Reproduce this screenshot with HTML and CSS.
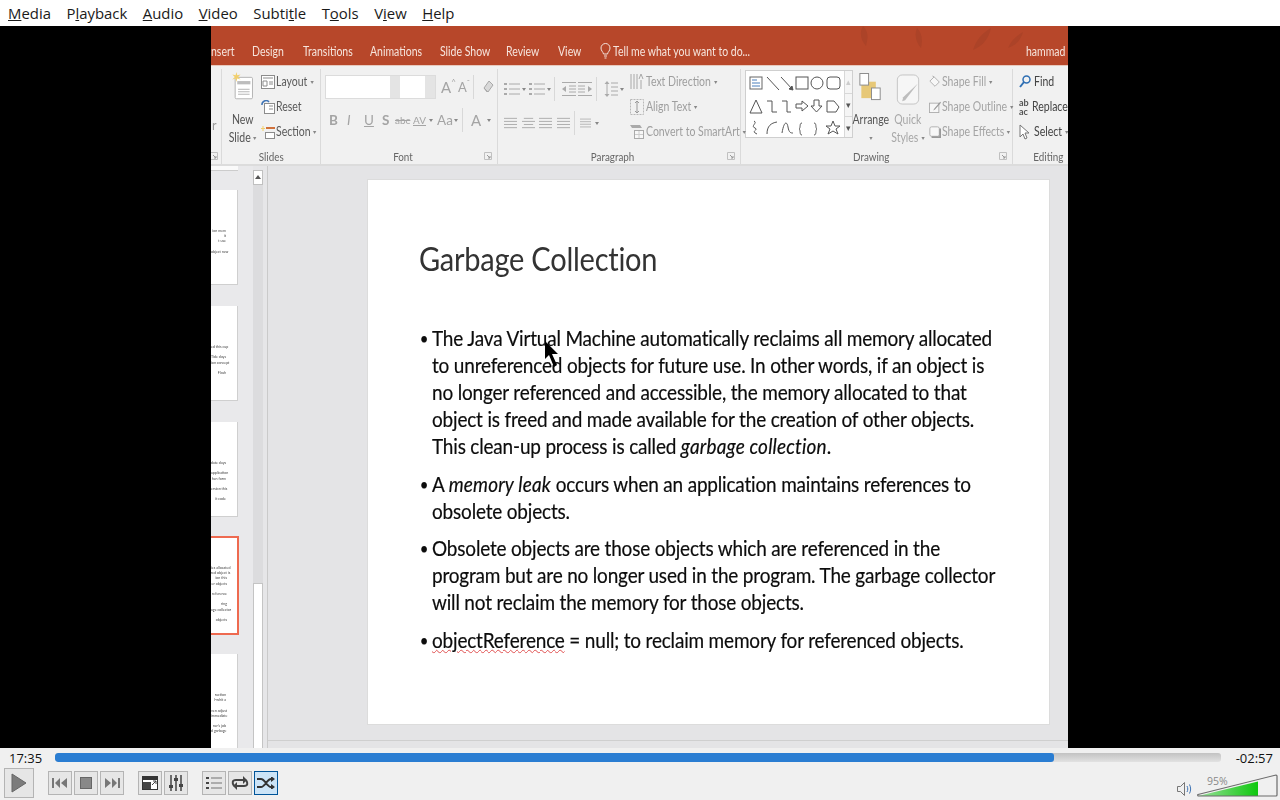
FILE: index.html
```html
<!DOCTYPE html>
<html lang="en">
<head>
    <meta charset="UTF-8">
    <meta name="viewport" content="width=device-width, initial-scale=1.0">
    <title>VLC media player</title>
    <link rel="stylesheet" href="styles.css">
</head>
<body>
    <svg class="defs" width="0" height="0">
        <symbol id="lines" viewBox="0 0 14 12"><path d="M0 1h14M0 4.300h14M0 7.600h14M0 11h14" stroke="currentColor" fill="none"/></symbol>
        <symbol id="centered" viewBox="0 0 14 12"><path d="M2 1h10M0 4.300h14M2 7.600h10M0 11h14" stroke="currentColor" fill="none"/></symbol>
        <symbol id="bullets" viewBox="0 0 16 14"><path d="M5 2h11M5 7h11M5 12h11" stroke="currentColor" fill="none"/><path d="M0 1h3v2H0zM0 6h3v2H0zM0 11h3v2H0z" fill="currentColor"/></symbol>
        <symbol id="launcher" viewBox="0 0 8 8"><path d="M.5.500h7v7h-7z" fill="none" stroke="#c0c0c0"/><path d="M3 3l3 3M6 4v2H4" stroke="#999" fill="none"/></symbol>
    </svg>

    <nav class="menubar">
        <a><u>M</u>edia</a>
        <a>P<u>l</u>ayback</a>
        <a><u>A</u>udio</a>
        <a><u>V</u>ideo</a>
        <a>Subti<u>t</u>le</a>
        <a>T<u>o</u>ols</a>
        <a>V<u>i</u>ew</a>
        <a><u>H</u>elp</a>
    </nav>

    <div class="video">
        <div class="frame">
            <div class="tabs">
                <svg class="leaves" width="400" height="39" viewBox="0 0 400 39">
                    <path d="M225 0c6 6 5 12 3 20-5-6-7-13-3-20zM279 2c5 5 6 12 4 20-5-6-7-13-4-20zM335 24c3-10 9-17 18-22-2 10-8 18-18 22zM370 22c3-7 8-12 15-16-2 7-6 13-15 16z" fill="#ac4328"/>
                </svg>
                <span class="t">nsert</span>
                <span class="t">Design</span>
                <span class="t">Transitions</span>
                <span class="t">Animations</span>
                <span class="t">Slide Show</span>
                <span class="t">Review</span>
                <span class="t">View</span>
                <svg class="bulb" width="11" height="16" viewBox="0 0 11 16"><path d="M3.500 11C3 8.500 1 8 1 5a4.500 4.500 0 0 1 9 0c0 3-2 3.500-2.500 6zM4 13h3M4.500 15h2" fill="none" stroke="#f3e3dc"/></svg>
                <span class="t">Tell me what you want to do...</span>
                <span class="t user">hammad r</span>
            </div>

            <div class="ribbon">
                <section class="group g-stub">
                    <div class="group-body"><span class="stub-r">r</span></div>
                    <div class="group-label"><span></span><span></span><svg class="launch"><use href="#launcher"/></svg></div>
                </section>

                <section class="group g-slides">
                    <div class="group-body">
                        <div class="big-btn">
                            <svg width="26" height="34" viewBox="0 0 26 34">
                                <rect x="3.500" y="6.500" width="21" height="26" rx="1.500" fill="#fff" stroke="#a6a6a6"/>
                                <rect x="6" y="11" width="16" height="4" fill="#bdbdbd"/>
                                <path d="M7 21h14M7 24h14M7 27h14" stroke="#a6a6a6"/>
                                <path d="M5 0l1 4 4-1-3 3 3 3-4-1-1 4-1-4-4 1 3-3-3-3 4 1z" fill="#f2cf6b"/>
                            </svg>
                            <span class="big-label">New<br>Slide <i class="caret"></i></span>
                        </div>
                        <div class="col">
                            <div class="row-item"><svg width="14" height="14" viewBox="0 0 14 14"><rect x=".5" y=".5" width="13" height="13" fill="#fff" stroke="#8c8c8c"/><path d="M2 3h10M2 6h4v5H2zM8 7h4M8 9h4" stroke="#8c8c8c" fill="none"/></svg><span class="t">Layout <i class="caret"></i></span></div>
                            <div class="row-item"><svg width="14" height="14" viewBox="0 0 14 14"><rect x="3.500" y="3.500" width="10" height="10" fill="#fff" stroke="#8c8c8c"/><path d="M8 6h4M8 9h4" stroke="#8c8c8c"/><path d="M1 5a4 4 0 0 1 7-3" stroke="#3f74b5" stroke-width="1.500" fill="none"/></svg><span class="t">Reset</span></div>
                            <div class="row-item"><svg width="14" height="14" viewBox="0 0 14 14"><rect x="4.500" y="7.500" width="9" height="6" fill="#fff" stroke="#8c8c8c"/><path d="M5 3h9" stroke="#d0713b" stroke-width="2"/><path d="M2 1v5M0 3.500h4" stroke="#f2cf6b"/></svg><span class="t">Section <i class="caret"></i></span></div>
                        </div>
                    </div>
                    <div class="group-label no-launch"><span></span><span>Slides</span><span></span></div>
                </section>

                <section class="group g-font">
                    <div class="group-body col">
                        <div class="font-row">
                            <div class="combo"><span class="combo-name"></span><span class="combo-arrow"></span><span class="combo-size"></span><span class="combo-arrow"></span></div>
                            <span class="f-a big">A<sup>^</sup></span>
                            <span class="f-a small">A<sup>ˇ</sup></span>
                            <i class="vr"></i>
                            <svg width="12" height="14" viewBox="0 0 12 14"><path d="M7 1l4 4-5 7-4-4zM2 8l3 4" fill="#d8d8d8" stroke="#a8a8a8"/></svg>
                        </div>
                        <div class="format-row">
                            <b>B</b><em>I</em><u>U</u><span class="fs">S</span><s>abc</s><span class="av"><u>AV</u></span><i class="caret"></i><span class="aa">Aa</span><i class="caret"></i><i class="vr"></i><span class="color-a">A</span><i class="caret"></i>
                        </div>
                    </div>
                    <div class="group-label"><span></span><span>Font</span><svg class="launch"><use href="#launcher"/></svg></div>
                </section>

                <section class="group g-para">
                    <div class="group-body">
                        <div class="para-left">
                            <div class="para-row">
                                <svg width="16" height="14"><use href="#bullets"/></svg><i class="caret"></i>
                                <svg width="16" height="14"><use href="#bullets"/></svg><i class="caret"></i>
                                <i class="vr"></i>
                                <svg width="14" height="14" viewBox="0 0 14 14"><path d="M0 .5h14M7 4h7M7 7h7M7 10h7M0 13.500h14" stroke="currentColor"/><path d="M0 7l4-3v6z" fill="currentColor"/></svg>
                                <svg width="14" height="14" viewBox="0 0 14 14"><path d="M0 .5h14M0 4h7M0 7h7M0 10h7M0 13.500h14" stroke="currentColor"/><path d="M14 7l-4-3v6z" fill="currentColor"/></svg>
                                <i class="vr"></i>
                                <svg width="14" height="16" viewBox="0 0 14 16"><path d="M7 2h7M7 6h7M7 10h7M7 14h7M3 1v14" stroke="currentColor"/><path d="M3 0l2.500 3h-5zM3 16l2.500-3h-5z" fill="currentColor"/></svg><i class="caret"></i>
                            </div>
                            <div class="para-row align-row">
                                <svg width="13" height="12"><use href="#lines"/></svg>
                                <svg width="13" height="12"><use href="#centered"/></svg>
                                <svg width="13" height="12"><use href="#lines"/></svg>
                                <svg width="13" height="12"><use href="#lines"/></svg>
                                <i class="vr"></i>
                                <svg width="11" height="12"><use href="#lines"/></svg><i class="caret"></i>
                            </div>
                        </div>
                        <div class="col">
                            <div class="row-item"><svg width="14" height="18" viewBox="0 0 14 18"><path d="M1 1v15M4 1v15M7 1v15M11 7v9" stroke="#a8a8a8" fill="none"/><path d="M9 6l2-5 2 5" stroke="#a8a8a8" fill="none"/></svg><span class="t">Text Direction <i class="caret"></i></span></div>
                            <div class="row-item"><svg width="14" height="16" viewBox="0 0 14 16"><rect x=".5" y=".5" width="13" height="15" fill="none" stroke="#b8b8b8" stroke-dasharray="2 1"/><path d="M7 2v12M5 4l2-2 2 2M5 12l2 2 2-2" stroke="#999" fill="none"/></svg><span class="t">Align Text <i class="caret"></i></span></div>
                            <div class="row-item"><svg width="14" height="14" viewBox="0 0 14 14"><path d="M0 0h10l2 3H2z" fill="#aaa"/><rect x="4.500" y="5.500" width="9" height="8" fill="#f7f7f7" stroke="#aaa"/><path d="M9 6v7M5 9.500h8" stroke="#ccc"/></svg><span class="t">Convert to SmartArt <i class="caret"></i></span></div>
                        </div>
                    </div>
                    <div class="group-label"><span></span><span>Paragraph</span><svg class="launch"><use href="#launcher"/></svg></div>
                </section>

                <section class="group g-draw">
                    <div class="group-body">
                        <div class="gallery">
                            <svg width="98" height="67" viewBox="0 0 98 67" fill="none" stroke="#555">
                                <rect x="4" y="6" width="12" height="12" stroke="#666"/><path d="M6 9h5M6 12h8M6 15h8" stroke="#4a7ebb"/>
                                <path d="M21 6l12 13M35 6l12 13"/><path d="M47 19l-4-1 3-3z" fill="#555"/>
                                <rect x="50" y="6" width="12" height="12"/><circle cx="71" cy="12" r="6"/><rect x="81" y="6" width="13" height="12" rx="3"/>
                                <path d="M4 42l6-13 6 13zM21 30h5v11h5M36 30h5v11h4M50 33h6v-3l6 5-6 5v-3h-6zM68 29h5v6h3l-5.500 6-5.500-6h3zM81 30h7l5 6-3 5h-9z"/>
                                <path d="M8 50c4 2-4 5 1 7 4 2-5 3 2 6M21 63c0-8 4-11 10-12M36 62c2-12 5-12 6-6s3 6 5 6M56 52c-3 0-1 5-3 6 2 1 0 6 3 6M68 52c3 0 1 5 3 6-2 1 0 6-3 6M87 50l2 5h5l-4 3 2 5-5-3-5 3 2-5-4-3h5z"/>
                            </svg>
                            <div class="gallery-arrows"><span class="ga-up">▴</span><span class="ga-down">▾</span><span class="ga-more">▾</span></div>
                        </div>
                        <div class="big-btn arrange">
                            <svg width="24" height="30" viewBox="0 0 24 30"><rect x="2" y="9" width="15" height="17" fill="#e7c877"/><rect x=".5" y=".5" width="9" height="12" fill="#fff" stroke="#8c8c8c"/><rect x="12.500" y="15.500" width="9" height="12" fill="#fff" stroke="#8c8c8c"/></svg>
                            <span class="big-label">Arrange<br><i class="caret"></i></span>
                        </div>
                        <div class="big-btn quick">
                            <svg width="24" height="32" viewBox="0 0 24 32"><rect x="1" y="1" width="22" height="30" rx="5" fill="#f6f6f6" stroke="#c4c4c4"/><path d="M22 10L9 27l-3 1 1-4z" fill="#bdbdbd"/></svg>
                            <span class="big-label">Quick<br>Styles <i class="caret"></i></span>
                        </div>
                        <div class="col shape-col">
                            <div class="row-item"><svg width="12" height="14" viewBox="0 0 14 14"><path d="M6 1l6 6-5 5-6-6zM6 1L4 0" fill="#f7f7f7" stroke="#a8a8a8"/></svg><span class="t">Shape Fill <i class="caret"></i></span></div>
                            <div class="row-item"><svg width="12" height="14" viewBox="0 0 14 14"><rect x=".5" y="2.500" width="11" height="11" fill="#f7f7f7" stroke="#a8a8a8"/><path d="M13 1L6 9l-1 2 2-1 7-8z" fill="#999"/></svg><span class="t">Shape Outline <i class="caret"></i></span></div>
                            <div class="row-item"><svg width="12" height="14" viewBox="0 0 14 14"><rect x="1" y="1" width="11" height="11" rx="2" fill="#f7f7f7" stroke="#a8a8a8"/><path d="M13 3v10H3" stroke="#999" stroke-width="2" fill="none"/></svg><span class="t">Shape Effects <i class="caret"></i></span></div>
                        </div>
                    </div>
                    <div class="group-label"><span></span><span>Drawing</span><svg class="launch"><use href="#launcher"/></svg></div>
                </section>

                <section class="group g-edit">
                    <div class="group-body col">
                        <div class="row-item"><svg width="12" height="14" viewBox="0 0 12 14"><circle cx="7.500" cy="4.500" r="3.500" fill="none" stroke="#2f6fb3" stroke-width="1.500"/><path d="M5 7l-4 5" stroke="#2f6fb3" stroke-width="2"/></svg><span class="t">Find</span></div>
                        <div class="row-item"><span class="ab">ab<br>ac</span><span class="t">Replace</span></div>
                        <div class="row-item"><svg width="12" height="16" viewBox="0 0 12 16"><path d="M1 1v12l3-3 2 5 2-1-2-5h4z" fill="#fff" stroke="#777"/></svg><span class="t">Select <i class="caret"></i></span></div>
                    </div>
                    <div class="group-label no-launch"><span></span><span>Editing</span><span></span></div>
                </section>
            </div>

            <div class="workspace">
                <aside class="thumbs">
                    <div class="thumb-end"></div>
                    <div class="thumb">ion mem<br>it<br>t use<br><br>object new</div>
                    <div class="thumb">ed this cup<br><br>Tide days<br>ion concept<br><br>Flash</div>
                    <div class="thumb">date days<br><br>application<br>hen form<br><br>ersion this<br><br>it code</div>
                    <div class="thumb active">ies allocated<br>red object is<br>ion this<br>er objects<br><br>reference<br><br>ring<br>age collector<br><br>objects</div>
                    <div class="thumb">ruction<br>l-whit a<br><br>ven adjust<br>immediate<br><br>ner's job<br>d garbage</div>
                </aside>
                <div class="scrollbar">
                    <span class="scroll-up"></span>
                    <span class="scroll-track"></span>
                    <span class="scroll-rest"></span>
                </div>
                <main class="canvas">
                    <article class="slide">
                        <h1>Garbage Collection</h1>
                        <ul>
                            <li>The Java Virtual Machine automatically reclaims all memory allocated<br>to unreferenced objects for future use. In other words, if an object is<br>no longer referenced and accessible, the memory allocated to that<br>object is freed and made available for the creation of other objects.<br>This clean-up process is called <em>garbage collection</em>.</li>
                            <li>A <em>memory leak</em> occurs when an application maintains references to<br>obsolete objects.</li>
                            <li>Obsolete objects are those objects which are referenced in the<br>program but are no longer used in the program. The garbage collector<br>will not reclaim the memory for those objects.</li>
                            <li><span class="squiggle">objectReference</span> = null; to reclaim memory for referenced objects.</li>
                        </ul>
                        <svg class="pointer" width="15" height="28" viewBox="0 0 15 28"><path d="M1 0v18l4-4 5 12 3-2-5-11h6z" fill="#000"/></svg>
                    </article>
                </main>
            </div>
        </div>
    </div>

    <footer class="controls">
        <div class="seek-row">
            <span class="time">17:35</span>
            <div class="seek"><div class="seek-fill"></div></div>
            <span class="time">-02:57</span>
        </div>
        <div class="button-row">
            <button class="btn play"><svg width="16" height="20" viewBox="0 0 16 20"><path d="M1 1l14 9-14 9z" fill="#7c7c7c" stroke="#666"/></svg></button>
            <div class="btn-set">
                <button class="btn"><svg width="16" height="10" viewBox="0 0 16 10"><path d="M0 0h2v10H0zM8 0v10L3 5zM15 0v10l-6-5z" fill="#777"/></svg></button>
                <button class="btn"><svg width="12" height="12" viewBox="0 0 12 12"><rect x=".5" y=".5" width="11" height="11" fill="#888" stroke="#666"/></svg></button>
                <button class="btn"><svg width="16" height="10" viewBox="0 0 16 10"><path d="M16 0h-2v10h2zM8 0v10l5-5zM1 0v10l6-5z" fill="#777"/></svg></button>
            </div>
            <div class="btn-set">
                <button class="btn"><svg width="16" height="14" viewBox="0 0 16 14"><rect x=".5" y=".5" width="15" height="13" fill="#fff" stroke="#333"/><rect x="1" y="1" width="14" height="3" fill="#333"/><rect x="1" y="6" width="8" height="7" fill="#444"/><path d="M10 9l4-4M11 5h3v3" stroke="#444" fill="none"/></svg></button>
                <button class="btn"><svg width="16" height="16" viewBox="0 0 16 16"><path d="M3 0v16M8 0v16M13 0v16" stroke="#444" stroke-width="1.500"/><path d="M1 10h4v3H1zM6 3h4v3H6zM11 9h4v3h-4z" fill="#444"/></svg></button>
            </div>
            <div class="btn-set">
                <button class="btn"><svg width="16" height="12" viewBox="0 0 16 12"><path d="M0 0h3v2H0zM0 5h3v2H0zM0 10h3v2H0z" fill="#444"/><path d="M5 1h11M5 6h11M5 11h11" stroke="#999" stroke-width="1.500"/></svg></button>
                <button class="btn"><svg width="18" height="14" viewBox="0 0 18 14"><path d="M3 10C1 7 1 4 5 4h9M15 4c2 3 2 6-2 6H4" fill="none" stroke="#444" stroke-width="2"/><path d="M12 0l4 4-4 4zM6 6l-4 4 4 4z" fill="#444"/></svg></button>
                <button class="btn on"><svg width="18" height="12" viewBox="0 0 18 12"><path d="M0 2h4c4 0 6 8 10 8h1M0 10h4c4 0 6-8 10-8h1" fill="none" stroke="#333" stroke-width="2"/><path d="M14-1l4 3-4 3zM14 7l4 3-4 3z" fill="#333"/></svg></button>
            </div>
            <div class="volume">
                <svg width="15" height="14" viewBox="0 0 15 14"><path d="M.5 4.500h3l4-4v13l-4-4h-3z" fill="#f0f0f0" stroke="#777"/><path d="M10 4c1 2 1 4 0 6M12.500 2.500c1.500 3 1.500 6 0 9" stroke="#3f74b5" fill="none"/></svg>
                <div class="vol-slider">
                    <span class="vol-pct">95%</span>
                    <svg width="82" height="24" viewBox="0 0 82 24">
                        <defs><linearGradient id="volgrad"><stop offset="0" stop-color="#9bdf9b"/><stop offset="1" stop-color="#0fc80f"/></linearGradient></defs>
                        <path d="M1 22L61 7.500V22z" fill="url(#volgrad)"/>
                        <path d="M1 20.500L79 1c.7 0 1 .3 1 1v19c0 .7-.3 1-1 1H2c-1.500 0-1.500-1-1-1.500z" fill="none" stroke="#6b6b6b" stroke-width="1.200"/>
                    </svg>
                </div>
            </div>
        </div>
    </footer>
</body>
</html>
```

FILE: styles.css
```css
* { box-sizing: border-box; }

html, body {
    height: 100%;
}

body {
    margin: 0;
    display: flex;
    flex-direction: column;
    height: 800px;
    overflow: hidden;
    font-family: 'Open Sans', sans-serif;
    background: #000;
}

.defs { position: absolute; }

/* player menu */
.menubar {
    height: 26px;
    flex: none;
    display: flex;
    align-items: center;
    gap: 15.500px;
    padding: 0 8px 1px;
    background: #fff;
    font-size: 14.900px;
    color: #1a1a1a;
}

/* video area */
.video {
    flex: 1;
    min-height: 0;
    display: flex;
    justify-content: center;
    background: #000;
}

.frame {
    width: 857px;
    margin-left: -1px;
    display: flex;
    flex-direction: column;
    overflow: hidden;
    background: #e6e6e8;
    font-family: 'Lato', sans-serif;
    filter: blur(0.35px);
}

/* the video squeezes the ribbon text sideways */
.t {
    display: inline-block;
    transform: scaleX(0.84);
    transform-origin: left center;
}

.tabs {
    position: relative;
    flex: none;
    height: 39px;
    display: grid;
    grid-template-columns: 41px 51px 67px 70px 66px 52px 42px 13px 1fr 42px;
    align-items: end;
    padding-bottom: 6px;
    background: #b7472a;
    color: #f6e4dc;
    font-size: 12.500px;
    white-space: nowrap;
}

.leaves {
    position: absolute;
    right: 30px;
    top: 0;
}

.tabs .t, .bulb { position: relative; }
.user { overflow: hidden; width: 50px; }

/* ribbon */
.ribbon {
    flex: none;
    height: 101px;
    display: flex;
    background: #f1f1f1;
    border-top: 1px solid #e8c9bd;
    border-bottom: 2px solid #dcdcdc;
    color: #555;
    font-size: 12.500px;
    white-space: nowrap;
}

.group {
    flex: none;
    display: flex;
    flex-direction: column;
    border-right: 1px solid #dadada;
    margin-top: 3px;
}

.group-body {
    flex: 1;
    display: flex;
    min-height: 0;
}

.group-label {
    flex: none;
    height: 17px;
    padding: 1px 4px 0 0;
    display: grid;
    grid-template-columns: 1fr auto 1fr;
    align-items: center;
    color: #666;
    font-size: 12px;
}

.group-label span:nth-child(2) {
    transform: scaleX(0.82);
}

.group-label.no-launch { padding-right: 0; }

.launch {
    width: 8px;
    height: 8px;
    justify-self: end;
    transform: translateX(-1px);
}

.g-font .group-label span:nth-child(2),
.g-para .group-label span:nth-child(2) { margin-left: -8px; }
.g-draw .group-label span:nth-child(2) { margin-left: -6px; }

.g-stub { width: 11px; }
.g-slides { width: 99px; }
.g-font { width: 177px; }
.g-para { width: 243px; }
.g-draw { width: 272px; }
.g-edit { width: 70px; border-right: none; overflow: hidden; }

.stub-r { align-self: flex-end; margin: 0 0 14px 1px; color: #999; }

.col {
    display: flex;
    flex-direction: column;
}

.row-item {
    height: 25px;
    display: flex;
    align-items: center;
    gap: 2px;
    color: #5a5a5a;
}

.caret {
    display: inline-block;
    width: 0;
    height: 0;
    border: 2.500px solid transparent;
    border-top: 3px solid #888;
    border-bottom: 0;
    vertical-align: middle;
}

.vr {
    display: block;
    flex: none;
    width: 1px;
    height: 24px;
    background: #d8d8d8;
}

.big-btn {
    flex: none;
    display: flex;
    flex-direction: column;
    align-items: center;
}

.big-label {
    text-align: center;
    line-height: 18px;
    color: #555;
    transform: scaleX(0.84);
}

.g-slides .big-btn { width: 39px; padding: 3px 0 0 3px; }
.g-slides .big-btn svg { margin-bottom: 11px; }
.g-slides .row-item { gap: 1px; }

/* font group */
.g-font .group-body { padding: 5px 0 0 3px; }

.font-row {
    height: 26px;
    display: flex;
    align-items: center;
    color: #a4a4a4;
}

.combo {
    display: flex;
    height: 24px;
    width: 111px;
    margin: 0 5px 0 1px;
    border: 1px solid #dcdcdc;
    background: #fff;
}

.combo-name { width: 64px; }
.combo-size { width: 25px; }
.combo-arrow { width: 10px; background: #e4e4e4; }

.f-a { display: inline-flex; }
.f-a.big { font-size: 15px; width: 17px; }
.f-a.small { font-size: 13px; width: 15px; }
.f-a sup { font-size: 8px; line-height: 8px; }
.font-row .vr { margin-right: 8px; }

.format-row {
    margin-top: 8px;
    height: 24px;
    padding-left: 5px;
    display: flex;
    align-items: center;
    font-size: 13.500px;
    color: #a4a4a4;
}

.format-row b { width: 18px; }
.format-row em { width: 17px; }
.format-row > u { width: 18px; }
.fs { font-weight: 700; width: 13px; }
.format-row s { font-size: 10px; width: 18px; }
.av { font-size: 10px; width: 16px; }
.format-row .caret { margin-right: 4px; }
.aa { font-size: 13.500px; width: 17px; }
.format-row .vr { margin-right: 8px; }
.color-a { font-size: 15px; width: 16px; }

/* paragraph group */
.g-para .group-body { padding-left: 6px; }

.para-left {
    flex: none;
    width: 126px;
    color: #aaa;
}

.para-row {
    display: flex;
    align-items: center;
    height: 28px;
    margin-top: 6px;
}

.para-row .caret { margin: 0 3px 0 2px; }
.para-row .vr { margin-right: 7px; }
.para-row svg + svg { margin-left: 2px; }
.para-row svg + .vr { margin-left: 4px; }

.align-row {
    gap: 4.500px;
    margin-top: 6px;
}

.align-row .vr { margin: 0; }
.align-row svg + svg { margin-left: 0; }
.align-row svg + .vr { margin-left: 0; }
.align-row .caret { margin: 0; }

.g-para .row-item { color: #9e9e9e; }

/* drawing group */
.gallery {
    flex: none;
    width: 108px;
    height: 68px;
    margin: 1px 0 0 4px;
    display: flex;
    background: #fff;
    border: 1px solid #cfcfcf;
}

.gallery-arrows {
    flex: 1;
    display: flex;
    flex-direction: column;
    border-left: 1px solid #d8d8d8;
    background: #f5f5f5;
    font-size: 9px;
    line-height: 22px;
    text-align: center;
    color: #555;
}

.ga-up { color: #ccc; }
.ga-down, .ga-more { border-top: 1px solid #d8d8d8; }

.arrange { width: 36px; padding-top: 4px; }
.arrange svg { margin-bottom: 9px; }
.quick { width: 38px; padding-top: 5px; }
.quick svg { margin-bottom: 6px; }
.quick .big-label { color: #a8a8a8; }
.shape-col { flex: none; margin-left: 2px; }
.shape-col .row-item { color: #a4a4a4; gap: 1px; }

/* editing group */
.g-edit .group-body { padding-left: 6px; }
.g-edit .row-item { color: #444; gap: 3px; }

.ab {
    font-size: 9px;
    line-height: 9px;
    font-weight: 700;
    color: #555;
}

/* slide sorter + slide */
.workspace {
    flex: 1;
    min-height: 0;
    display: flex;
}

.thumbs {
    width: 42px;
    flex: none;
    overflow: hidden;
    background: #e9e9eb;
}

.thumb-end {
    width: 27px;
    height: 5px;
    margin-bottom: 19px;
    background: #fafafa;
    border-bottom: 1px solid #ccc;
}

.thumb {
    width: 27px;
    height: 95px;
    margin-bottom: 21px;
    padding: 38px 11px 0 0;
    background: #fff;
    border: solid #cfcfcf;
    border-width: 0 1px 1px 0;
    font-size: 3.600px;
    line-height: 5.200px;
    color: #444;
    text-align: right;
    white-space: nowrap;
    overflow: hidden;
}

.thumb.active {
    width: 28px;
    height: 99px;
    margin: -2px 0 19px;
    padding: 27px 10px 0 0;
    border: 2px solid #ee6a50;
    border-left: 0;
}

.scrollbar {
    width: 10px;
    flex: none;
    display: flex;
    flex-direction: column;
    padding-top: 4px;
    margin-right: 4px;
}

.scroll-up {
    position: relative;
    height: 15px;
    flex: none;
    background: #fff;
    border: 1px solid #c0c0c0;
}

.scroll-up::after {
    content: "";
    position: absolute;
    left: 1px;
    top: 4px;
    border: 3px solid transparent;
    border-bottom: 4px solid #555;
    border-top: 0;
}

.scroll-track {
    height: 398px;
    flex: none;
    background: #dcdcde;
}

.scroll-rest {
    flex: 1;
    background: #fff;
    border: 1px solid #c4c4c4;
    border-bottom: 0;
}

.canvas {
    flex: 1;
    min-width: 0;
    padding: 13px 18px 0 99px;
    background: #e4e4e6;
    border-left: 1px solid #cacaca;
}

.canvas::after {
    content: "";
    display: block;
    margin: 15px -18px 0 -99px;
    border-top: 1px solid #cfcfcf;
}

.slide {
    position: relative;
    height: 546px;
    padding: 54px 0 0 52px;
    background: #fff;
    border: 1px solid #dcdcdc;
    color: #0c0c0c;
    font-family: 'Lato', sans-serif;
    white-space: nowrap;
}

.slide h1 {
    margin: 0 0 0 -1px;
    height: 48px;
    font-size: 33px;
    line-height: 48px;
    font-weight: 400;
    color: #333;
    letter-spacing: -0.3px;
    transform: scaleX(0.88);
    transform-origin: left center;
}

.slide ul {
    margin: 43px 0 0;
    padding: 0 0 0 12px;
    list-style: none;
    font-size: 21.500px;
    line-height: 27px;
    letter-spacing: -0.2px;
    -webkit-text-stroke: 0.2px #0c0c0c;
}

.slide li {
    position: relative;
    margin-bottom: 10.500px;
    transform: scaleX(0.882);
    transform-origin: left center;
}

.slide li em { letter-spacing: 0.2px; }

.slide li::before {
    content: "•";
    position: absolute;
    left: -14px;
    font-size: 17px;
}

.squiggle {
    text-decoration: underline wavy #e05050 1px;
}

.pointer {
    position: absolute;
    left: 176px;
    top: 161px;
}

/* playback controls */
.controls {
    flex: none;
    height: 52px;
    background: #f0f0f0;
    font-family: 'Open Sans', sans-serif;
}

.seek-row {
    height: 20px;
    display: flex;
    align-items: center;
    padding: 0 7px 1px 9px;
    font-size: 13px;
    color: #111;
}

.time { flex: none; }

.seek {
    flex: 1;
    height: 9px;
    margin: 0 15px 0 13px;
    border-radius: 3px;
    overflow: hidden;
    background: linear-gradient(#c2c2c2, #e2e2e2);
}

.seek-fill {
    height: 100%;
    width: 85.700%;
    background: #2a7dd2;
    border-radius: 3px;
}

.button-row {
    display: flex;
    align-items: center;
    height: 30px;
    padding-left: 4px;
}

.btn-set {
    display: flex;
    gap: 2px;
    margin-left: 14px;
}

.btn {
    width: 24px;
    height: 24px;
    padding: 0;
    display: flex;
    align-items: center;
    justify-content: center;
    border: 1px solid #b4b4b4;
    background: #e6e6e6;
}

.btn.play {
    width: 30px;
    height: 30px;
}

.btn.on {
    background: #cce4f7;
    border-color: #005499;
}

.volume {
    margin-left: auto;
    padding-right: 1px;
    display: flex;
    align-items: flex-end;
    gap: 5px;
    height: 30px;
}

.volume > svg { margin-bottom: 2px; }

.vol-slider {
    position: relative;
    height: 24px;
}

.vol-pct {
    position: absolute;
    left: 10px;
    top: 0;
    font-size: 10.500px;
    color: #888;
}
```
